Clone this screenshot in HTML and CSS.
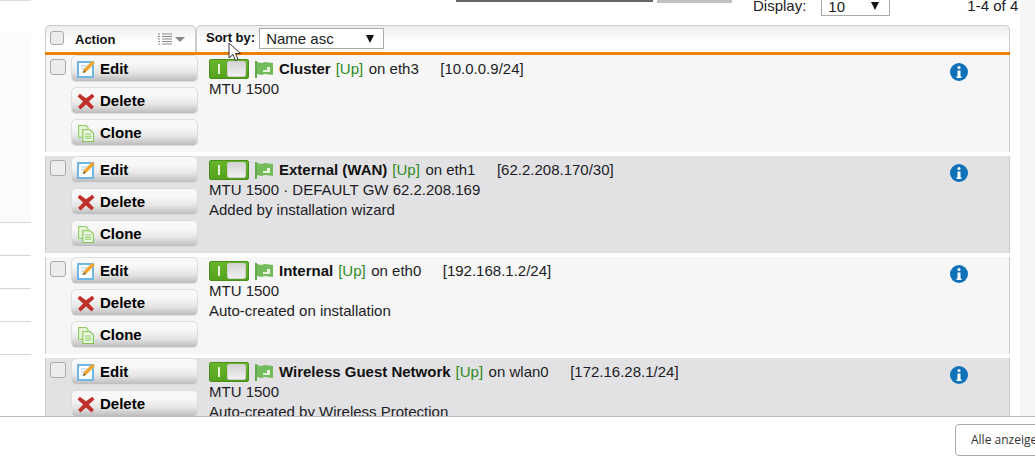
FILE: index.html
```html
<!DOCTYPE html>
<html lang="en">
<head>
    <meta charset="UTF-8">
    <title>Interfaces</title>
    <link rel="stylesheet" href="styles.css">
</head>
<body>
    <svg class="sprites" width="0" height="0">
        <symbol id="i-edit" viewBox="0 0 18 18">
            <rect x="1" y="2" width="15" height="15" fill="#fff" stroke="#6fb6e4" stroke-width="2"/>
            <path d="M4 6h6M4 9h4M4 12h3" stroke="#a9cfe8" stroke-width="1"/>
            <path d="M6 13l1-4 8-8 3 2-8 8z" fill="#f2a42c"/>
            <path d="M6 13l1-3 2 2z" fill="#7a5a2a"/>
        </symbol>
        <symbol id="i-delete" viewBox="0 0 16 16">
            <path d="M2.500 1.500L8 5.500l5.500-4 2 2.500L10.500 8.500 15 13l-2 2.500-5-4.500-5 4.500-2-2.500 4.500-4.500L.5 4z" fill="#c0302a"/>
        </symbol>
        <symbol id="i-clone" viewBox="0 0 17 17">
            <path d="M1.500 1.500h7l2 2v9h-9z" fill="#e4f3d6" stroke="#8ccb62"/>
            <path d="M5.500 5.500h7l3 3v8h-10z" fill="#eef8e4" stroke="#7fc452"/>
            <path d="M7.500 9.500h6M7.500 11.500h6M7.500 13.500h6" stroke="#8ccb62"/>
        </symbol>
        <symbol id="i-flag" viewBox="0 0 18 17">
            <path d="M0 0h2v17H0z" fill="#62a950"/>
            <path d="M2 1l4 1 4-1 8 1v12l-8-1-4 1-4-1z" fill="#74bb5c"/>
            <path d="M8 9h4V6h3v5H8z" fill="#e6f5dc"/>
        </symbol>
        <symbol id="i-info" viewBox="0 0 18 18">
            <circle cx="9" cy="9" r="9" fill="#0f72b8"/>
            <circle cx="9" cy="4.500" r="1.500" fill="#fff"/>
            <path d="M7.500 7.500h3v6h1v1.500h-5v-1.500h1z" fill="#fff"/>
        </symbol>
    </svg>

    <div class="page">
        <div class="sidebar">
            <div class="side-top"></div>
            <div class="side-panel"></div>
            <div class="side-item"></div>
            <div class="side-item"></div>
            <div class="side-item"></div>
            <div class="side-item"></div>
            <div class="side-item"></div>
        </div>

        <div class="main">
            <div class="toolbar">
                <div class="search-box"></div>
                <div class="search-btn"></div>
                <span class="display-label">Display:</span>
                <div class="pick pick-display">10<span class="caret"></span></div>
                <span class="page-count">1-4 of 4</span>
            </div>

            <div class="table">
                <div class="table-head">
                    <div class="head-action">
                        <span class="check"></span>
                        <span class="head-title">Action</span>
                        <svg class="list-icon" width="14" height="12" viewBox="0 0 14 12">
                            <path d="M0 1h2M4 1h10M0 3.500h2M4 3.500h10M0 6h2M4 6h10M0 8.500h2M4 8.500h10M0 11h2M4 11h10" stroke="#8a8a8a" fill="none"/>
                        </svg>
                        <span class="head-caret"></span>
                    </div>
                    <div class="head-sort">
                        <span class="sort-label">Sort by:</span>
                        <div class="pick pick-sort">Name asc<span class="caret"></span></div>
                    </div>
                </div>

                <div class="row">
                    <div class="row-action">
                        <span class="check"></span>
                        <div class="btn-stack">
                            <div class="btn"><svg class="btn-icon"><use href="#i-edit"/></svg>Edit</div>
                            <div class="btn"><svg class="btn-icon"><use href="#i-delete"/></svg>Delete</div>
                            <div class="btn"><svg class="btn-icon"><use href="#i-clone"/></svg>Clone</div>
                        </div>
                    </div>
                    <div class="row-body">
                        <div class="title-line">
                            <span class="toggle"><span class="toggle-knob"></span></span>
                            <svg class="flag"><use href="#i-flag"/></svg>
                            <div class="title-text">
                                <b>Cluster</b>
                                <span class="status">[Up]</span>
                                <span class="iface">on eth3</span>
                                <span class="addr">[10.0.0.9/24]</span>
                            </div>
                        </div>
                        <div class="line">MTU 1500</div>
                    </div>
                    <svg class="info"><use href="#i-info"/></svg>
                </div>

                <div class="row">
                    <div class="row-action">
                        <span class="check"></span>
                        <div class="btn-stack">
                            <div class="btn"><svg class="btn-icon"><use href="#i-edit"/></svg>Edit</div>
                            <div class="btn"><svg class="btn-icon"><use href="#i-delete"/></svg>Delete</div>
                            <div class="btn"><svg class="btn-icon"><use href="#i-clone"/></svg>Clone</div>
                        </div>
                    </div>
                    <div class="row-body">
                        <div class="title-line">
                            <span class="toggle"><span class="toggle-knob"></span></span>
                            <svg class="flag"><use href="#i-flag"/></svg>
                            <div class="title-text">
                                <b>External (WAN)</b>
                                <span class="status">[Up]</span>
                                <span class="iface">on eth1</span>
                                <span class="addr">[62.2.208.170/30]</span>
                            </div>
                        </div>
                        <div class="line">MTU 1500 · DEFAULT GW 62.2.208.169</div>
                        <div class="line">Added by installation wizard</div>
                    </div>
                    <svg class="info"><use href="#i-info"/></svg>
                </div>

                <div class="row">
                    <div class="row-action">
                        <span class="check"></span>
                        <div class="btn-stack">
                            <div class="btn"><svg class="btn-icon"><use href="#i-edit"/></svg>Edit</div>
                            <div class="btn"><svg class="btn-icon"><use href="#i-delete"/></svg>Delete</div>
                            <div class="btn"><svg class="btn-icon"><use href="#i-clone"/></svg>Clone</div>
                        </div>
                    </div>
                    <div class="row-body">
                        <div class="title-line">
                            <span class="toggle"><span class="toggle-knob"></span></span>
                            <svg class="flag"><use href="#i-flag"/></svg>
                            <div class="title-text">
                                <b>Internal</b>
                                <span class="status">[Up]</span>
                                <span class="iface">on eth0</span>
                                <span class="addr">[192.168.1.2/24]</span>
                            </div>
                        </div>
                        <div class="line">MTU 1500</div>
                        <div class="line">Auto-created on installation</div>
                    </div>
                    <svg class="info"><use href="#i-info"/></svg>
                </div>

                <div class="row">
                    <div class="row-action">
                        <span class="check"></span>
                        <div class="btn-stack">
                            <div class="btn"><svg class="btn-icon"><use href="#i-edit"/></svg>Edit</div>
                            <div class="btn"><svg class="btn-icon"><use href="#i-delete"/></svg>Delete</div>
                            <div class="btn"><svg class="btn-icon"><use href="#i-clone"/></svg>Clone</div>
                        </div>
                    </div>
                    <div class="row-body">
                        <div class="title-line">
                            <span class="toggle"><span class="toggle-knob"></span></span>
                            <svg class="flag"><use href="#i-flag"/></svg>
                            <div class="title-text">
                                <b>Wireless Guest Network</b>
                                <span class="status">[Up]</span>
                                <span class="iface">on wlan0</span>
                                <span class="addr">[172.16.28.1/24]</span>
                            </div>
                        </div>
                        <div class="line">MTU 1500</div>
                        <div class="line">Auto-created by Wireless Protection</div>
                    </div>
                    <svg class="info"><use href="#i-info"/></svg>
                </div>
            </div>
        </div>

        <div class="scroll-strip"></div>
    </div>

    <div class="footer">
        <div class="show-all">Alle anzeigen</div>
    </div>

    <svg class="cursor" width="14" height="20" viewBox="0 0 14 20">
        <path d="M1 1v15l4-3.500 2.500 6 2.500-1-2.500-6h5z" fill="#fff" stroke="#333" stroke-width="1"/>
    </svg>
</body>
</html>
```

FILE: styles.css
```css
* {
    box-sizing: border-box;
}

html, body {
    margin: 0;
    height: 100%;
    overflow: hidden;
}

body {
    position: relative;
    background: #fff;
    color: #1c1c24;
    font-family: "Liberation Sans", Arial, sans-serif;
    font-size: 15px;
}

.sprites {
    position: absolute;
}

.page {
    display: flex;
    height: 416px;
    overflow: hidden;
}

/* left nav, only its edge is visible */
.sidebar {
    width: 31px;
    flex-shrink: 0;
}

.side-top {
    height: 33px;
    border-top: 1px solid #ddd;
}

.side-panel {
    height: 189px;
    background: #fbfbfb;
}

.side-item {
    height: 33px;
    border-top: 1px solid #d4d4d4;
}

.main {
    width: 965px;
    margin-left: 14px;
    flex-shrink: 0;
}

.scroll-strip {
    width: 15px;
    margin-left: 10px;
    flex-shrink: 0;
    background: #f6f6f6;
}

.toolbar {
    display: flex;
    height: 25px;
    align-items: flex-start;
}

.toolbar > * {
    flex-shrink: 0;
}

.search-box {
    width: 197px;
    height: 2px;
    margin-left: 411px;
    border-bottom: 2px solid #666;
    border-left: 1px solid #666;
    border-right: 1px solid #666;
}

.search-btn {
    width: 75px;
    height: 3px;
    margin-left: 4px;
    background: #c2c2c2;
}

.display-label {
    margin-left: 21px;
    line-height: 12px;
    white-space: nowrap;
}

.pick {
    display: flex;
    align-items: center;
    justify-content: space-between;
    background: #fff;
    border: 1px solid #aaa;
    color: #222;
}

.pick-display {
    width: 69px;
    height: 16px;
    margin-left: 15px;
    padding: 0 10px 3px 6px;
    border-top: 0;
}

.page-count {
    margin-left: 77px;
    line-height: 12px;
    white-space: nowrap;
}

.caret {
    width: 0;
    height: 0;
    border-left: 4px solid transparent;
    border-right: 4px solid transparent;
    border-top: 8px solid #111;
}

.table {
    width: 965px;
}

.table-head {
    display: flex;
    height: 30px;
    border-bottom: 3px solid #f08000;
}

.head-action,
.head-sort {
    display: flex;
    align-items: center;
    background: linear-gradient(#ececec, #fff 60%);
    border: 1px solid #ccc;
    border-bottom: 0;
    border-radius: 5px 5px 0 0;
}

.head-action {
    width: 151px;
    padding-left: 4px;
}

.head-sort {
    flex: 1;
    padding-left: 9px;
}

.head-title {
    margin-left: 11px;
    margin-top: 1px;
    font-size: 13px;
    font-weight: bold;
    color: #111;
}

.list-icon {
    margin-left: 43px;
}

.head-caret {
    margin-left: 3px;
    width: 0;
    height: 0;
    border-left: 5px solid transparent;
    border-right: 5px solid transparent;
    border-top: 5px solid #888;
}

.sort-label {
    font-size: 13px;
    font-weight: bold;
    margin-top: -3px;
    color: #111;
}

.pick-sort {
    width: 125px;
    height: 21px;
    margin-left: 4px;
    margin-top: -1px;
    padding: 0 9px 0 6px;
}

.check {
    display: block;
    width: 16px;
    height: 16px;
    flex-shrink: 0;
    background: #ececec;
    border: 1px solid #aaa;
    border-radius: 3px;
}

.head-action .check {
    width: 14px;
    height: 14px;
    margin-top: -3px;
}

.row {
    display: flex;
    height: 97px;
    margin-bottom: 4px;
    overflow: hidden;
    background: #f6f6f6;
    border-left: 1px solid #ccc;
    border-right: 1px solid #ccc;
}

.row:nth-child(odd) {
    background: #e2e2e4;
}

.row-action {
    display: flex;
    width: 163px;
    flex-shrink: 0;
    padding: 4px 0 0 4px;
}

.btn-stack {
    display: flex;
    flex-direction: column;
    gap: 5px;
    margin: -4px 0 0 5px;
}

.btn {
    display: flex;
    align-items: center;
    width: 127px;
    height: 27px;
    padding-left: 5px;
    background: linear-gradient(#f8f8f8 30%, #e6e6e6 65%, #bdbdbd);
    border: 1px solid #ddd;
    border-radius: 5px;
    color: #000;
    font-weight: bold;
}

.btn-icon {
    width: 18px;
    height: 18px;
    margin-right: 5px;
}

.row-body {
    flex: 1;
    padding-top: 4px;
}

.title-line {
    display: flex;
    align-items: center;
    height: 20px;
}

.title-text {
    display: flex;
    margin-top: -2px;
    white-space: nowrap;
}

.title-text b {
    color: #111;
}

.line {
    height: 20px;
    line-height: 20px;
}

.toggle {
    display: flex;
    justify-content: flex-end;
    align-items: center;
    width: 40px;
    height: 20px;
    padding-right: 2px;
    margin-right: 6px;
    background: linear-gradient(#68b52c, #55a31d);
    border: 1px solid #4a8f1a;
    border-radius: 2px;
    position: relative;
}

.toggle::before {
    content: "";
    position: absolute;
    left: 8px;
    top: 4px;
    width: 2px;
    height: 10px;
    background: #e8f4dc;
}

.toggle-knob {
    width: 19px;
    height: 16px;
    background: linear-gradient(#d4d4d4, #f0f0f0);
    border: 1px solid #cfcfcf;
    border-radius: 2px;
}

.flag {
    width: 18px;
    height: 17px;
    margin-right: 6px;
    flex-shrink: 0;
}

.status {
    margin-left: 5px;
    color: #2f8c23;
}

.iface {
    margin-left: 5.5px;
}

.addr {
    margin-left: 21.5px;
}

.info {
    width: 18px;
    height: 18px;
    margin: 8px 41px 0 0;
}

.footer {
    position: absolute;
    left: 0;
    right: 0;
    top: 416px;
    height: 46px;
    display: flex;
    justify-content: flex-end;
    padding-top: 7px;
    background: #fff;
    border-top: 1px solid #bbb;
    overflow: hidden;
}

.show-all {
    flex-shrink: 0;
    width: 110px;
    height: 32px;
    line-height: 30px;
    margin-right: -30px;
    padding-left: 15px;
    background: #fff;
    border: 1px solid #aaa;
    border-radius: 4px;
    color: #333;
    font-family: "Open Sans", sans-serif;
    font-size: 12px;
}

.cursor {
    position: absolute;
    left: 228px;
    top: 42px;
}
```
